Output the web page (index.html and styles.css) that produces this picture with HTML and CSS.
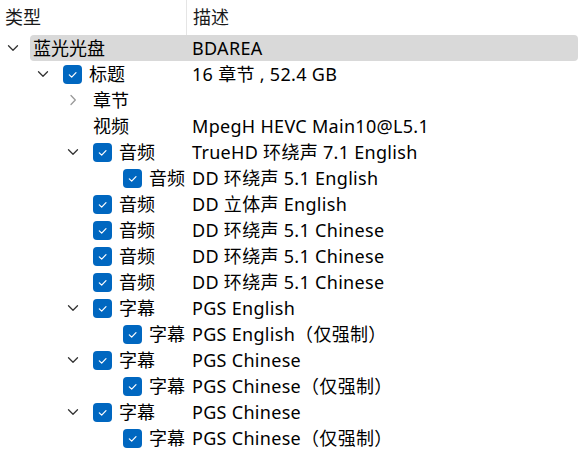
FILE: index.html
```html
<!DOCTYPE html>
<html lang="zh">
<head>
<meta charset="utf-8">
<link rel="stylesheet" href="styles.css">
</head>
<body>
<div class="tree">
  <div class="header">
    <div class="hcell first">类型</div>
    <div class="hcell">描述</div>
  </div>
  <div class="rows">
    <div class="row selected lv0">
      <div class="c1"><span class="exp"><svg width="12" height="8" viewBox="0 0 12 8"><path d="M1.5 1.8 L6 6.2 L10.5 1.8" class="down"/></svg></span><span class="label">蓝光光盘</span></div>
      <div class="c2">BDAREA</div>
    </div>
    <div class="row lv1">
      <div class="c1"><span class="exp"><svg width="12" height="8" viewBox="0 0 12 8"><path d="M1.5 1.8 L6 6.2 L10.5 1.8" class="down"/></svg></span><span class="cb"><svg width="19" height="19" viewBox="0 0 19 19"><path d="M6.3 9.8 L8.7 12.2 L13 7.6"/></svg></span><span class="label">标题</span></div>
      <div class="c2">16 章节 , 52.4 GB</div>
    </div>
    <div class="row lv2">
      <div class="c1"><span class="exp"><svg width="8" height="12" viewBox="0 0 8 12"><path d="M2 1.5 L6.3 6 L2 10.5" class="right"/></svg></span><span class="label">章节</span></div>
      <div class="c2"></div>
    </div>
    <div class="row lv2">
      <div class="c1"><span class="exp"></span><span class="label">视频</span></div>
      <div class="c2">MpegH HEVC Main10@L5.1</div>
    </div>
    <div class="row lv2">
      <div class="c1"><span class="exp"><svg width="12" height="8" viewBox="0 0 12 8"><path d="M1.5 1.8 L6 6.2 L10.5 1.8" class="down"/></svg></span><span class="cb"><svg width="19" height="19" viewBox="0 0 19 19"><path d="M6.3 9.8 L8.7 12.2 L13 7.6"/></svg></span><span class="label">音频</span></div>
      <div class="c2">TrueHD 环绕声 7.1 English</div>
    </div>
    <div class="row lv3">
      <div class="c1"><span class="exp"></span><span class="cb"><svg width="19" height="19" viewBox="0 0 19 19"><path d="M6.3 9.8 L8.7 12.2 L13 7.6"/></svg></span><span class="label">音频</span></div>
      <div class="c2">DD 环绕声 5.1 English</div>
    </div>
    <div class="row lv2">
      <div class="c1"><span class="exp"></span><span class="cb"><svg width="19" height="19" viewBox="0 0 19 19"><path d="M6.3 9.8 L8.7 12.2 L13 7.6"/></svg></span><span class="label">音频</span></div>
      <div class="c2">DD 立体声 English</div>
    </div>
    <div class="row lv2">
      <div class="c1"><span class="exp"></span><span class="cb"><svg width="19" height="19" viewBox="0 0 19 19"><path d="M6.3 9.8 L8.7 12.2 L13 7.6"/></svg></span><span class="label">音频</span></div>
      <div class="c2">DD 环绕声 5.1 Chinese</div>
    </div>
    <div class="row lv2">
      <div class="c1"><span class="exp"></span><span class="cb"><svg width="19" height="19" viewBox="0 0 19 19"><path d="M6.3 9.8 L8.7 12.2 L13 7.6"/></svg></span><span class="label">音频</span></div>
      <div class="c2">DD 环绕声 5.1 Chinese</div>
    </div>
    <div class="row lv2">
      <div class="c1"><span class="exp"></span><span class="cb"><svg width="19" height="19" viewBox="0 0 19 19"><path d="M6.3 9.8 L8.7 12.2 L13 7.6"/></svg></span><span class="label">音频</span></div>
      <div class="c2">DD 环绕声 5.1 Chinese</div>
    </div>
    <div class="row lv2">
      <div class="c1"><span class="exp"><svg width="12" height="8" viewBox="0 0 12 8"><path d="M1.5 1.8 L6 6.2 L10.5 1.8" class="down"/></svg></span><span class="cb"><svg width="19" height="19" viewBox="0 0 19 19"><path d="M6.3 9.8 L8.7 12.2 L13 7.6"/></svg></span><span class="label">字幕</span></div>
      <div class="c2">PGS English</div>
    </div>
    <div class="row lv3">
      <div class="c1"><span class="exp"></span><span class="cb"><svg width="19" height="19" viewBox="0 0 19 19"><path d="M6.3 9.8 L8.7 12.2 L13 7.6"/></svg></span><span class="label">字幕</span></div>
      <div class="c2">PGS English（仅强制）</div>
    </div>
    <div class="row lv2">
      <div class="c1"><span class="exp"><svg width="12" height="8" viewBox="0 0 12 8"><path d="M1.5 1.8 L6 6.2 L10.5 1.8" class="down"/></svg></span><span class="cb"><svg width="19" height="19" viewBox="0 0 19 19"><path d="M6.3 9.8 L8.7 12.2 L13 7.6"/></svg></span><span class="label">字幕</span></div>
      <div class="c2">PGS Chinese</div>
    </div>
    <div class="row lv3">
      <div class="c1"><span class="exp"></span><span class="cb"><svg width="19" height="19" viewBox="0 0 19 19"><path d="M6.3 9.8 L8.7 12.2 L13 7.6"/></svg></span><span class="label">字幕</span></div>
      <div class="c2">PGS Chinese（仅强制）</div>
    </div>
    <div class="row lv2">
      <div class="c1"><span class="exp"><svg width="12" height="8" viewBox="0 0 12 8"><path d="M1.5 1.8 L6 6.2 L10.5 1.8" class="down"/></svg></span><span class="cb"><svg width="19" height="19" viewBox="0 0 19 19"><path d="M6.3 9.8 L8.7 12.2 L13 7.6"/></svg></span><span class="label">字幕</span></div>
      <div class="c2">PGS Chinese</div>
    </div>
    <div class="row lv3">
      <div class="c1"><span class="exp"></span><span class="cb"><svg width="19" height="19" viewBox="0 0 19 19"><path d="M6.3 9.8 L8.7 12.2 L13 7.6"/></svg></span><span class="label">字幕</span></div>
      <div class="c2">PGS Chinese（仅强制）</div>
    </div>
  </div>
</div>
</body>
</html>
```

FILE: styles.css
```css
html, body {
  margin: 0;
  padding: 0;
  background: #ffffff;
}
body {
  font-family: "Noto Sans", "Noto Sans CJK SC", sans-serif;
  font-size: 18px;
  color: #000000;
  width: 578px;
  height: 467px;
  overflow: hidden;
}
.tree {
  display: flex;
  flex-direction: column;
}
.header {
  display: flex;
  height: 35px;
}
.hcell {
  line-height: 34px;
  padding-left: 5px;
  color: #1a1a1a;
}
.hcell.first {
  width: 181px;
  border-right: 1px solid #e5e5e5;
  height: 35px;
  box-sizing: content-box;
}
.hcell + .hcell {
  padding-left: 6px;
}
.rows {
  display: flex;
  flex-direction: column;
}
.row {
  display: flex;
  height: 26px;
  line-height: 26px;
  align-items: center;
  white-space: nowrap;
  position: relative;
  z-index: 0;
}
.row.selected::before {
  content: "";
  position: absolute;
  left: 30px;
  right: 0;
  top: 0;
  bottom: 0;
  background: #d9d9d9;
  border-radius: 4px;
  z-index: -1;
}
.c1 {
  width: 192px;
  flex-shrink: 0;
  display: flex;
  align-items: center;
  box-sizing: border-box;
}
.lv0 .c1 { padding-left: 0; }
.lv1 .c1 { padding-left: 30px; }
.lv2 .c1 { padding-left: 60px; }
.lv3 .c1 { padding-left: 90px; }
.exp {
  width: 25px;
  height: 26px;
  margin-right: 8px;
  display: flex;
  align-items: center;
  justify-content: center;
  flex-shrink: 0;
}
.exp svg { display: block; }
.exp path {
  fill: none;
  stroke-width: 1.3;
  stroke-linecap: round;
  stroke-linejoin: round;
}
.exp path.down { stroke: #333333; }
.exp path.right { stroke: #9a9a9a; }
.cb {
  width: 19px;
  height: 19px;
  background: #0067c0;
  border-radius: 4px;
  margin-right: 7px;
  flex-shrink: 0;
}
.cb svg { display: block; }
.cb path {
  fill: none;
  stroke: #ffffff;
  stroke-width: 1.2;
  stroke-linecap: round;
  stroke-linejoin: round;
}
.label {
  overflow: visible;
}
.c2 {
  letter-spacing: 0.3px;
}
```
